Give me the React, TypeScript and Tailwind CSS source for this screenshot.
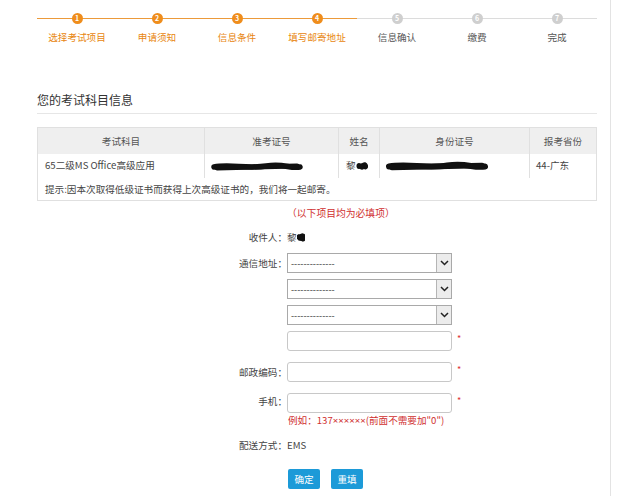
import type { ReactNode } from 'react'

const STEPS = [
  { n: 1, label: '选择考试项目', done: true },
  { n: 2, label: '申请须知', done: true },
  { n: 3, label: '信息条件', done: true },
  { n: 4, label: '填写邮寄地址', done: true },
  { n: 5, label: '信息确认', done: false },
  { n: 6, label: '缴费', done: false },
  { n: 7, label: '完成', done: false },
]

const FONT = "font-['Noto_Sans_CJK_SC','Noto_Sans',sans-serif]"

// black marker scribble used to hide personal data
const Scribble = ({ w, h }: { w: number; h: number }) => (
  <svg width={w} height={h} viewBox={`0 0 ${w} ${h}`} className="inline-block align-middle">
    <path
      d={`M3 ${h / 2} C${w * 0.2} ${h / 2 - 3}, ${w * 0.4} ${h / 2 + 2}, ${w * 0.6} ${h / 2 - 1} S${w * 0.85} ${h / 2 + 2}, ${w - 3} ${h / 2}`}
      stroke="#111"
      strokeWidth={h * 0.55}
      strokeLinecap="round"
      fill="none"
    />
    <path
      d={`M6 ${h / 2 + 1} L${w - 6} ${h / 2 - 1}`}
      stroke="#111"
      strokeWidth={h * 0.5}
      strokeLinecap="round"
    />
  </svg>
)

const Select = () => (
  <div className="flex h-[20px] w-[165px] border border-[#a9a9a9] bg-white">
    <div className="flex flex-1 items-center pl-[3px] text-[9px] leading-none text-[#333]">--------------</div>
    <div className="flex w-[15px] items-center justify-center border-l border-[#b5b5b5] bg-[#ececec]">
      <svg width="9" height="6" viewBox="0 0 9 6">
        <path d="M1 1 L4.5 4.5 L8 1" stroke="#222" strokeWidth="1.5" fill="none" />
      </svg>
    </div>
  </div>
)

const Input = () => <div className="h-[20px] w-[165px] rounded-[3px] border border-[#c8c8c8] bg-white" />

const Star = () => <span className="ml-[5px] self-start pt-[3px] text-[9px] leading-none text-[#d33]">*</span>

const Row = ({ label, children, className = '' }: { label?: string; children: ReactNode; className?: string }) => (
  <div className={`flex items-center ${className}`}>
    <div className="w-[250px] text-right text-[9.6px] leading-[14px] text-[#444]">{label}</div>
    {children}
  </div>
)

const App = () => {
  return (
    <div className={`h-[496px] w-[640px] overflow-hidden bg-white ${FONT}`}>
      <div className="h-full w-[611px] border-r border-[#e3e3e3] pl-[37px] pr-[13px]">
        {/* steps */}
        <div className="flex h-[50px] pt-[13px]">
          {STEPS.map((s) => (
            <div key={s.n} className="relative flex w-[80px] flex-col items-center">
              <div className={`absolute left-0 right-0 top-[5px] h-px ${s.done ? 'bg-[#ec9a3a]' : 'bg-[#dcdcdc]'}`} />
              <div
                className={`relative flex h-[11px] w-[11px] items-center justify-center rounded-full text-[7px] font-bold leading-none text-white ${
                  s.done ? 'bg-[#ef8d1c]' : 'bg-[#cfcfcf]'
                }`}
              >
                {s.n}
              </div>
              <div className={`mt-[9px] text-[9.6px] leading-none ${s.done ? 'text-[#e8860f]' : 'text-[#555]'}`}>
                {s.label}
              </div>
            </div>
          ))}
        </div>

        {/* title */}
        <div className="mt-[43px] border-b border-[#e6e6e6] pb-[6px] text-[12px] leading-[14px] text-[#333]">
          您的考试科目信息
        </div>

        {/* exam table */}
        <table className="mt-[13px] w-[560px] border-collapse border border-[#e0e0e0] text-[9.6px] text-[#444]">
          <thead>
            <tr className="h-[26px] bg-[#efefef] text-[#555]">
              <th className="w-[167px] border-r border-[#e0e0e0] font-normal">考试科目</th>
              <th className="w-[134px] border-r border-[#e0e0e0] font-normal">准考证号</th>
              <th className="w-[41px] border-r border-[#e0e0e0] font-normal">姓名</th>
              <th className="w-[150px] border-r border-[#e0e0e0] font-normal">身份证号</th>
              <th className="font-normal">报考省份</th>
            </tr>
          </thead>
          <tbody>
            <tr className="h-[24px]">
              <td className="border-r border-[#e0e0e0] pl-[7px]">65二级MS Office高级应用</td>
              <td className="border-r border-[#e0e0e0] pl-[6px]">
                <Scribble w={92} h={10} />
              </td>
              <td className="border-r border-[#e0e0e0] pl-[7px]">
                黎<Scribble w={12} h={9} />
              </td>
              <td className="border-r border-[#e0e0e0] pl-[6px]">
                <Scribble w={102} h={11} />
              </td>
              <td className="pl-[6px]">44-广东</td>
            </tr>
            <tr className="h-[23px]">
              <td colSpan={5} className="pl-[7px]">
                提示:因本次取得低级证书而获得上次高级证书的，我们将一起邮寄。
              </td>
            </tr>
          </tbody>
        </table>

        {/* address form */}
        <div className="ml-[250px] mt-[6px] text-[9.8px] leading-[12px] text-[#d03030]">（以下项目均为必填项）</div>

        <Row label="收件人：" className="mt-[11px]">
          <span className="text-[9.6px] leading-[14px] text-[#444]">
            黎<Scribble w={8} h={10} />
          </span>
        </Row>
        <Row label="通信地址：" className="mt-[9px]">
          <Select />
        </Row>
        <Row className="mt-[6px]">
          <Select />
        </Row>
        <Row className="mt-[6px]">
          <Select />
        </Row>
        <Row className="mt-[6px]">
          <Input />
          <Star />
        </Row>
        <Row label="邮政编码：" className="mt-[11px]">
          <Input />
          <Star />
        </Row>
        <div className="mt-[11px] flex items-start">
          <div className="w-[250px] pt-[1px] text-right text-[9.6px] leading-[14px] text-[#444]">手机：</div>
          <Input />
          <Star />
        </div>
        <div className="ml-[251px] mt-[1px] text-[9.6px] leading-[12px] text-[#d03030]">
          例如：137<span className="font-['Noto_Sans',sans-serif]">××××××</span>(前面不需要加"0")
        </div>
        <div className="mt-[11px] flex text-[9.6px] leading-[14px] text-[#444]">
          <div className="w-[250px] text-right">配送方式：</div>
          <span>EMS</span>
        </div>

        <div className="ml-[251px] mt-[17px] flex gap-[11px]">
          <button className="h-[20px] w-[32px] rounded-[2px] bg-[#1c9ad8] text-[9.6px] text-white">确定</button>
          <button className="h-[20px] w-[32px] rounded-[2px] bg-[#1c9ad8] text-[9.6px] text-white">重填</button>
        </div>
      </div>
    </div>
  )
}

export default App
